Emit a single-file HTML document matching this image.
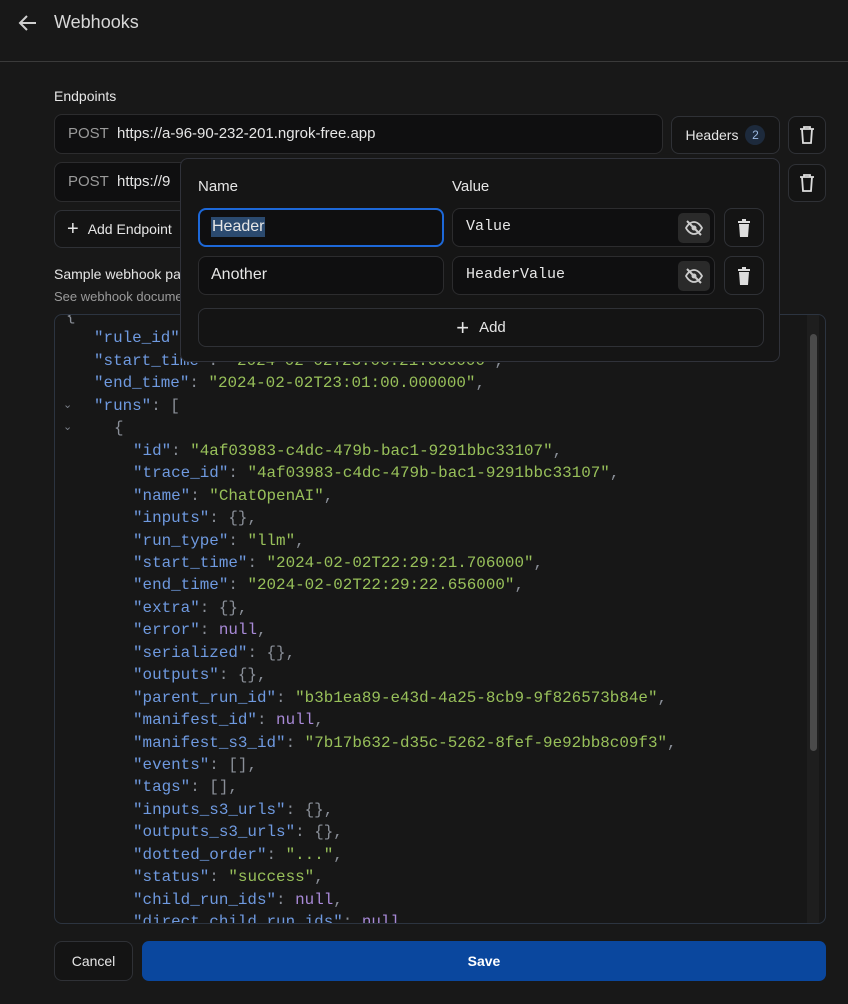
<!DOCTYPE html>
<html><head><style>
*{box-sizing:border-box;margin:0;padding:0}
body{width:848px;height:1004px;background:#181818;font-family:"Liberation Sans",sans-serif;color:#e6e6e6;position:relative;overflow:hidden;font-size:14px}
.abs{position:absolute}
.inp{position:absolute;background:#0f0f10;border:1px solid #2c2c2e;border-radius:8px}
.btn{position:absolute;border:1px solid #2f3136;border-radius:8px;background:#141414;display:flex;align-items:center;justify-content:center}
.code{position:absolute;left:54px;top:314px;width:772px;height:610px;border:1px solid #2c3440;border-radius:8px;overflow:hidden;background:#171717}
.ln{position:absolute;font-family:"Liberation Mono",monospace;font-size:15.9px;white-space:pre;line-height:22px}
.k{color:#6f9ae0}.s{color:#98c05a}.p{color:#8a8f98}.n{color:#a98ad8}
.chev{position:absolute;color:#7a7f88;font-size:11px}
</style></head><body>
<svg class="abs" style="left:17px;top:13px" width="22" height="20" viewBox="0 0 22 20"><path d="M19 10H3M10 3L3 10l7 7" stroke="#cfcfcf" stroke-width="2" fill="none"/></svg>
<div class="abs" style="left:54px;top:12px;font-size:18px;color:#d8d8d8">Webhooks</div>
<div class="abs" style="left:0;top:61px;width:848px;height:1px;background:#3a3a3a"></div>
<div class="abs" style="left:54px;top:88px;font-size:14px">Endpoints</div>

<div class="inp" style="left:54px;top:114px;width:609px;height:40px"><span class="abs" style="left:13px;top:10px;color:#9a9a9a;font-size:15px">POST</span><span class="abs" style="left:62px;top:10px;font-size:15px">https://a-96-90-232-201.ngrok-free.app</span></div>
<div class="btn" style="left:671px;top:116px;width:109px;height:38px;font-size:14px">Headers<span style="display:inline-block;width:20px;height:20px;border-radius:10px;background:#1d2a3c;color:#9bb8e0;font-size:12px;text-align:center;line-height:20px;margin-left:7px">2</span></div>
<div class="btn" style="left:788px;top:116px;width:38px;height:38px"><svg width="18" height="20" viewBox="0 0 18 20"><path d="M2 4h14M6 4V2h6v2M4 4l1 14h8l1-14" stroke="#ddd" stroke-width="1.8" fill="none"/></svg></div>
<div class="inp" style="left:54px;top:162px;width:609px;height:40px"><span class="abs" style="left:13px;top:10px;color:#9a9a9a;font-size:15px">POST</span><span class="abs" style="left:62px;top:10px;font-size:15px">https://9</span></div>
<div class="btn" style="left:788px;top:164px;width:38px;height:38px"><svg width="18" height="20" viewBox="0 0 18 20"><path d="M2 4h14M6 4V2h6v2M4 4l1 14h8l1-14" stroke="#ddd" stroke-width="1.8" fill="none"/></svg></div>
<div class="btn" style="left:54px;top:210px;width:160px;height:38px;justify-content:flex-start;padding-left:12px;font-size:14px"><span style="font-size:20px;margin-right:9px;font-weight:300">+</span>Add Endpoint</div>
<div class="abs" style="left:54px;top:266px;font-size:14px">Sample webhook payload</div>
<div class="abs" style="left:54px;top:289px;font-size:13px;color:#9a9a9a">See webhook documentation</div>

<div class="code">
<div class="abs" style="right:6px;top:0;width:12px;height:610px;background:#1e1e1e"></div>
<div class="abs" style="right:8px;top:19px;width:7px;height:417px;border-radius:4px;background:#4a4a4a"></div>
<div id="c"></div>
</div>

<div class="abs" style="left:180px;top:158px;width:600px;height:204px;background:#151515;border:1px solid #30323a;border-radius:8px">
<div class="abs" style="left:17px;top:19px;font-size:15px">Name</div>
<div class="abs" style="left:271px;top:19px;font-size:15px">Value</div>
<div class="inp" style="left:17px;top:49px;width:246px;height:39px;border:2px solid #1d68d8"><span class="abs" style="left:11px;top:7px;font-size:16px;background:#2b4a6f;padding:1px 1px">Header</span></div>
<div class="inp" style="left:271px;top:49px;width:263px;height:39px"><span class="abs" style="left:13px;top:9px;font-family:'Liberation Mono',monospace;font-size:15px">Value</span><div class="abs" style="right:4px;top:4px;width:32px;height:30px;background:#2a2a2a;border-radius:5px"><svg style="position:absolute;left:6px;top:5px" width="20" height="20" viewBox="0 0 20 20"><path d="M2 10s3-6 8-6 8 6 8 6-3 6-8 6-8-6-8-6z" stroke="#ccc" stroke-width="1.8" fill="none"/><circle cx="10" cy="10" r="2.5" fill="#ccc"/><path d="M3 3l14 14" stroke="#ccc" stroke-width="2"/></svg></div></div>
<div class="btn" style="left:543px;top:49px;width:40px;height:39px"><svg width="14" height="18" viewBox="0 0 14 18"><rect x="1" y="2" width="12" height="2" fill="#ddd"/><rect x="5" y="0" width="4" height="2" fill="#ddd"/><path d="M2 5h10l-1 13H3z" fill="#ddd"/></svg></div>
<div class="inp" style="left:17px;top:97px;width:246px;height:39px"><span class="abs" style="left:12px;top:9px;font-size:16px">Another</span></div>
<div class="inp" style="left:271px;top:97px;width:263px;height:39px"><span class="abs" style="left:13px;top:9px;font-family:'Liberation Mono',monospace;font-size:15px">HeaderValue</span><div class="abs" style="right:4px;top:4px;width:32px;height:30px;background:#2a2a2a;border-radius:5px"><svg style="position:absolute;left:6px;top:5px" width="20" height="20" viewBox="0 0 20 20"><path d="M2 10s3-6 8-6 8 6 8 6-3 6-8 6-8-6-8-6z" stroke="#ccc" stroke-width="1.8" fill="none"/><circle cx="10" cy="10" r="2.5" fill="#ccc"/><path d="M3 3l14 14" stroke="#ccc" stroke-width="2"/></svg></div></div>
<div class="btn" style="left:543px;top:97px;width:40px;height:39px"><svg width="14" height="18" viewBox="0 0 14 18"><rect x="1" y="2" width="12" height="2" fill="#ddd"/><rect x="5" y="0" width="4" height="2" fill="#ddd"/><path d="M2 5h10l-1 13H3z" fill="#ddd"/></svg></div>
<div class="btn" style="left:17px;top:149px;width:566px;height:39px;font-size:15px"><span style="font-size:22px;margin-right:10px;font-weight:300">+</span>Add</div>
</div>

<div class="btn" style="left:54px;top:941px;width:79px;height:40px;font-size:14px">Cancel</div>
<div class="abs" style="left:142px;top:941px;width:684px;height:40px;background:#0a479e;border-radius:7px;display:flex;align-items:center;justify-content:center;font-size:14px;font-weight:bold;color:#fff">Save</div>

<script>
const L=[
[0,'<span class="p">{</span>'],
[1,'<span class="k">"rule_id"</span><span class="p">: </span><span class="s">"0f2d2f3e-..."</span><span class="p">,</span>'],
[1,'<span class="k">"start_time"</span><span class="p">: </span><span class="s">"2024-02-02T23:00:21.000000"</span><span class="p">,</span>'],
[1,'<span class="k">"end_time"</span><span class="p">: </span><span class="s">"2024-02-02T23:01:00.000000"</span><span class="p">,</span>'],
[1,'<span class="k">"runs"</span><span class="p">: [</span>',1],
[2,'<span class="p">{</span>',1],
[3,'<span class="k">"id"</span><span class="p">: </span><span class="s">"4af03983-c4dc-479b-bac1-9291bbc33107"</span><span class="p">,</span>'],
[3,'<span class="k">"trace_id"</span><span class="p">: </span><span class="s">"4af03983-c4dc-479b-bac1-9291bbc33107"</span><span class="p">,</span>'],
[3,'<span class="k">"name"</span><span class="p">: </span><span class="s">"ChatOpenAI"</span><span class="p">,</span>'],
[3,'<span class="k">"inputs"</span><span class="p">: {},</span>'],
[3,'<span class="k">"run_type"</span><span class="p">: </span><span class="s">"llm"</span><span class="p">,</span>'],
[3,'<span class="k">"start_time"</span><span class="p">: </span><span class="s">"2024-02-02T22:29:21.706000"</span><span class="p">,</span>'],
[3,'<span class="k">"end_time"</span><span class="p">: </span><span class="s">"2024-02-02T22:29:22.656000"</span><span class="p">,</span>'],
[3,'<span class="k">"extra"</span><span class="p">: {},</span>'],
[3,'<span class="k">"error"</span><span class="p">: </span><span class="n">null</span><span class="p">,</span>'],
[3,'<span class="k">"serialized"</span><span class="p">: {},</span>'],
[3,'<span class="k">"outputs"</span><span class="p">: {},</span>'],
[3,'<span class="k">"parent_run_id"</span><span class="p">: </span><span class="s">"b3b1ea89-e43d-4a25-8cb9-9f826573b84e"</span><span class="p">,</span>'],
[3,'<span class="k">"manifest_id"</span><span class="p">: </span><span class="n">null</span><span class="p">,</span>'],
[3,'<span class="k">"manifest_s3_id"</span><span class="p">: </span><span class="s">"7b17b632-d35c-5262-8fef-9e92bb8c09f3"</span><span class="p">,</span>'],
[3,'<span class="k">"events"</span><span class="p">: [],</span>'],
[3,'<span class="k">"tags"</span><span class="p">: [],</span>'],
[3,'<span class="k">"inputs_s3_urls"</span><span class="p">: {},</span>'],
[3,'<span class="k">"outputs_s3_urls"</span><span class="p">: {},</span>'],
[3,'<span class="k">"dotted_order"</span><span class="p">: </span><span class="s">"..."</span><span class="p">,</span>'],
[3,'<span class="k">"status"</span><span class="p">: </span><span class="s">"success"</span><span class="p">,</span>'],
[3,'<span class="k">"child_run_ids"</span><span class="p">: </span><span class="n">null</span><span class="p">,</span>'],
[3,'<span class="k">"direct_child_run_ids"</span><span class="p">: </span><span class="n">null</span><span class="p">,</span>']
];
const xs=[11,39,59,78];let h='';
L.forEach((l,i)=>{const t=-10+i*22.45;h+='<div class="ln" style="left:'+xs[l[0]]+'px;top:'+t+'px">'+l[1]+'</div>';if(l[2])h+='<div class="chev" style="left:8px;top:'+(t+3)+'px">&#8964;</div>';});
document.getElementById('c').innerHTML=h;
</script>
</body></html>
